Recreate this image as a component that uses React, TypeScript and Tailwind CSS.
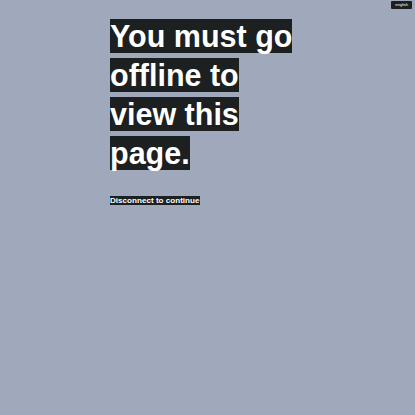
const font = { fontFamily: '"Liberation Sans", Arial, sans-serif' };

export default function App() {
  return (
    <div className="relative min-h-[415px] w-full bg-[#a0a8bc]" style={font}>
      <button
        type="button"
        className="absolute right-[3px] top-[1px] h-[8px] rounded-[1px] bg-[#1c2021] px-[4px] text-[4px] leading-[8px] text-white"
      >
        english
      </button>

      <main className="pl-[110px] pt-[17px]">
        <h1 className="w-[192px] text-[30.5px] font-bold leading-[39px] text-white">
          <span className="bg-[#1c2021]">You must go offline to view this page.</span>
        </h1>
        <p className="mt-[22px] text-[8.1px] font-bold leading-[12px] text-white">
          <span className="bg-[#1c2021]">Disconnect to continue</span>
        </p>
      </main>
    </div>
  );
}
